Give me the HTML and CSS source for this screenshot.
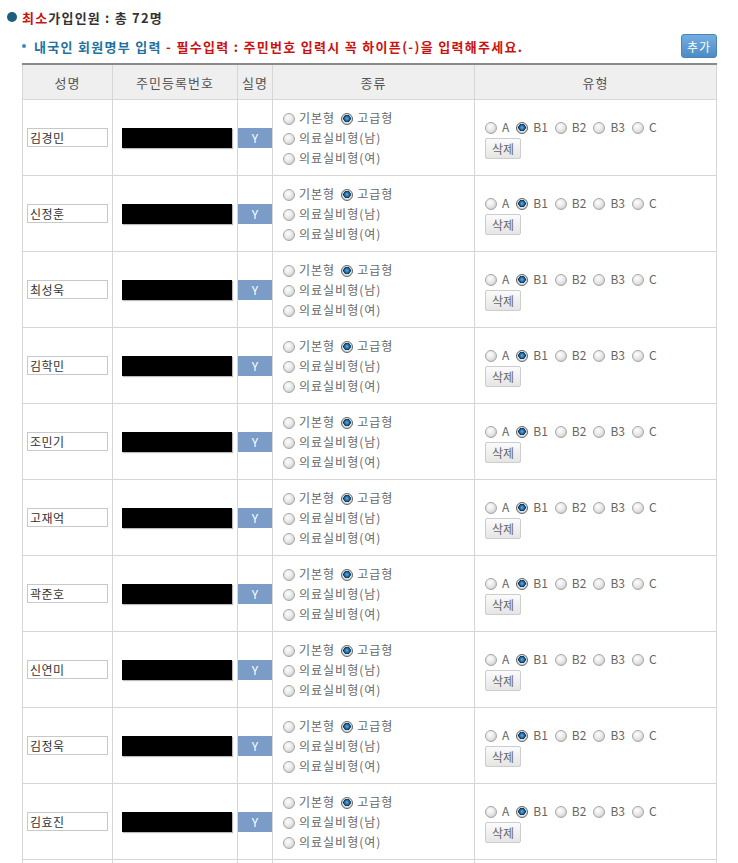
FILE: index.html
```html
<!DOCTYPE html>
<html>
<head>
<meta http-equiv="Content-Type" content="text/html; charset=utf-8"/>
<title>내국인 회원명부 입력</title>
<link rel="stylesheet" href="styles.css">
</head>
<body>

<p class="total"><span class="dot"></span><span class="red">최소</span>가입인원 : 총 72명</p>

<div class="bar">
  <p class="notice"><span class="mini"></span><span class="blue">내국인 회원명부 입력 </span><span class="red">- 필수입력 : 주민번호 입력시 꼭 하이픈(-)을 입력해주세요.</span></p>
  <button class="btn-add">추가</button>
</div>

<table class="members">
<thead>
<tr><th class="c-name">성명</th><th class="c-jumin">주민등록번호</th><th class="c-real">실명</th><th class="c-kind">종류</th><th>유형</th></tr>
</thead>
<tbody>
<tr>
<td><input class="txt" type="text" value="김경민"></td>
<td class="jumin"><span class="hide"></span></td>
<td class="real"><span class="ok">Y</span></td>
<td class="kind">
<label><input type="radio" name="k1">기본형</label><label><input type="radio" name="k1" checked>고급형</label><br>
<label><input type="radio" name="k1">의료실비형(남)</label><br>
<label><input type="radio" name="k1">의료실비형(여)</label>
</td>
<td class="grade">
<label><input type="radio" name="g1">A</label><label><input type="radio" name="g1" checked>B1</label><label><input type="radio" name="g1">B2</label><label><input type="radio" name="g1">B3</label><label><input type="radio" name="g1">C</label><br>
<button class="btn-del">삭제</button>
</td>
</tr>
<tr>
<td><input class="txt" type="text" value="신정훈"></td>
<td class="jumin"><span class="hide"></span></td>
<td class="real"><span class="ok">Y</span></td>
<td class="kind">
<label><input type="radio" name="k2">기본형</label><label><input type="radio" name="k2" checked>고급형</label><br>
<label><input type="radio" name="k2">의료실비형(남)</label><br>
<label><input type="radio" name="k2">의료실비형(여)</label>
</td>
<td class="grade">
<label><input type="radio" name="g2">A</label><label><input type="radio" name="g2" checked>B1</label><label><input type="radio" name="g2">B2</label><label><input type="radio" name="g2">B3</label><label><input type="radio" name="g2">C</label><br>
<button class="btn-del">삭제</button>
</td>
</tr>
<tr>
<td><input class="txt" type="text" value="최성욱"></td>
<td class="jumin"><span class="hide"></span></td>
<td class="real"><span class="ok">Y</span></td>
<td class="kind">
<label><input type="radio" name="k3">기본형</label><label><input type="radio" name="k3" checked>고급형</label><br>
<label><input type="radio" name="k3">의료실비형(남)</label><br>
<label><input type="radio" name="k3">의료실비형(여)</label>
</td>
<td class="grade">
<label><input type="radio" name="g3">A</label><label><input type="radio" name="g3" checked>B1</label><label><input type="radio" name="g3">B2</label><label><input type="radio" name="g3">B3</label><label><input type="radio" name="g3">C</label><br>
<button class="btn-del">삭제</button>
</td>
</tr>
<tr>
<td><input class="txt" type="text" value="김학민"></td>
<td class="jumin"><span class="hide"></span></td>
<td class="real"><span class="ok">Y</span></td>
<td class="kind">
<label><input type="radio" name="k4">기본형</label><label><input type="radio" name="k4" checked>고급형</label><br>
<label><input type="radio" name="k4">의료실비형(남)</label><br>
<label><input type="radio" name="k4">의료실비형(여)</label>
</td>
<td class="grade">
<label><input type="radio" name="g4">A</label><label><input type="radio" name="g4" checked>B1</label><label><input type="radio" name="g4">B2</label><label><input type="radio" name="g4">B3</label><label><input type="radio" name="g4">C</label><br>
<button class="btn-del">삭제</button>
</td>
</tr>
<tr>
<td><input class="txt" type="text" value="조민기"></td>
<td class="jumin"><span class="hide"></span></td>
<td class="real"><span class="ok">Y</span></td>
<td class="kind">
<label><input type="radio" name="k5">기본형</label><label><input type="radio" name="k5" checked>고급형</label><br>
<label><input type="radio" name="k5">의료실비형(남)</label><br>
<label><input type="radio" name="k5">의료실비형(여)</label>
</td>
<td class="grade">
<label><input type="radio" name="g5">A</label><label><input type="radio" name="g5" checked>B1</label><label><input type="radio" name="g5">B2</label><label><input type="radio" name="g5">B3</label><label><input type="radio" name="g5">C</label><br>
<button class="btn-del">삭제</button>
</td>
</tr>
<tr>
<td><input class="txt" type="text" value="고재억"></td>
<td class="jumin"><span class="hide"></span></td>
<td class="real"><span class="ok">Y</span></td>
<td class="kind">
<label><input type="radio" name="k6">기본형</label><label><input type="radio" name="k6" checked>고급형</label><br>
<label><input type="radio" name="k6">의료실비형(남)</label><br>
<label><input type="radio" name="k6">의료실비형(여)</label>
</td>
<td class="grade">
<label><input type="radio" name="g6">A</label><label><input type="radio" name="g6" checked>B1</label><label><input type="radio" name="g6">B2</label><label><input type="radio" name="g6">B3</label><label><input type="radio" name="g6">C</label><br>
<button class="btn-del">삭제</button>
</td>
</tr>
<tr>
<td><input class="txt" type="text" value="곽준호"></td>
<td class="jumin"><span class="hide"></span></td>
<td class="real"><span class="ok">Y</span></td>
<td class="kind">
<label><input type="radio" name="k7">기본형</label><label><input type="radio" name="k7" checked>고급형</label><br>
<label><input type="radio" name="k7">의료실비형(남)</label><br>
<label><input type="radio" name="k7">의료실비형(여)</label>
</td>
<td class="grade">
<label><input type="radio" name="g7">A</label><label><input type="radio" name="g7" checked>B1</label><label><input type="radio" name="g7">B2</label><label><input type="radio" name="g7">B3</label><label><input type="radio" name="g7">C</label><br>
<button class="btn-del">삭제</button>
</td>
</tr>
<tr>
<td><input class="txt" type="text" value="신연미"></td>
<td class="jumin"><span class="hide"></span></td>
<td class="real"><span class="ok">Y</span></td>
<td class="kind">
<label><input type="radio" name="k8">기본형</label><label><input type="radio" name="k8" checked>고급형</label><br>
<label><input type="radio" name="k8">의료실비형(남)</label><br>
<label><input type="radio" name="k8">의료실비형(여)</label>
</td>
<td class="grade">
<label><input type="radio" name="g8">A</label><label><input type="radio" name="g8" checked>B1</label><label><input type="radio" name="g8">B2</label><label><input type="radio" name="g8">B3</label><label><input type="radio" name="g8">C</label><br>
<button class="btn-del">삭제</button>
</td>
</tr>
<tr>
<td><input class="txt" type="text" value="김정욱"></td>
<td class="jumin"><span class="hide"></span></td>
<td class="real"><span class="ok">Y</span></td>
<td class="kind">
<label><input type="radio" name="k9">기본형</label><label><input type="radio" name="k9" checked>고급형</label><br>
<label><input type="radio" name="k9">의료실비형(남)</label><br>
<label><input type="radio" name="k9">의료실비형(여)</label>
</td>
<td class="grade">
<label><input type="radio" name="g9">A</label><label><input type="radio" name="g9" checked>B1</label><label><input type="radio" name="g9">B2</label><label><input type="radio" name="g9">B3</label><label><input type="radio" name="g9">C</label><br>
<button class="btn-del">삭제</button>
</td>
</tr>
<tr>
<td><input class="txt" type="text" value="김효진"></td>
<td class="jumin"><span class="hide"></span></td>
<td class="real"><span class="ok">Y</span></td>
<td class="kind">
<label><input type="radio" name="k10">기본형</label><label><input type="radio" name="k10" checked>고급형</label><br>
<label><input type="radio" name="k10">의료실비형(남)</label><br>
<label><input type="radio" name="k10">의료실비형(여)</label>
</td>
<td class="grade">
<label><input type="radio" name="g10">A</label><label><input type="radio" name="g10" checked>B1</label><label><input type="radio" name="g10">B2</label><label><input type="radio" name="g10">B3</label><label><input type="radio" name="g10">C</label><br>
<button class="btn-del">삭제</button>
</td>
</tr>
<tr>
<td><input class="txt" type="text" value="이수진"></td>
<td class="jumin"><span class="hide"></span></td>
<td class="real"><span class="ok">Y</span></td>
<td class="kind">
<label><input type="radio" name="k11">기본형</label><label><input type="radio" name="k11" checked>고급형</label><br>
<label><input type="radio" name="k11">의료실비형(남)</label><br>
<label><input type="radio" name="k11">의료실비형(여)</label>
</td>
<td class="grade">
<label><input type="radio" name="g11">A</label><label><input type="radio" name="g11" checked>B1</label><label><input type="radio" name="g11">B2</label><label><input type="radio" name="g11">B3</label><label><input type="radio" name="g11">C</label><br>
<button class="btn-del">삭제</button>
</td>
</tr>
</tbody>
</table>

</body>
</html>
```

FILE: styles.css
```css
body {
  margin: 0;
  background-color: white;
  font-family: "Noto Sans CJK KR", "Noto Sans", sans-serif;
  font-size: 12px;
  color: #555;
}

.red {
  color: #cc1111;
}

.blue {
  color: #22719f;
}

/* top line */
.total {
  display: flex;
  align-items: center;
  height: 18px;
  margin: 8px 0 0 7px;
  font-size: 13px;
  font-weight: bold;
  letter-spacing: 1.2px;
  color: #333;
  white-space: pre;
}

.total .dot {
  width: 10px;
  height: 10px;
  margin-right: 5px;
  border-radius: 50%;
  background-color: #1d5d7d;
}

.bar {
  display: flex;
  align-items: center;
  justify-content: space-between;
  width: 695px;
  height: 24px;
  margin: 8px 0 0 22px;
}

.notice {
  display: flex;
  align-items: center;
  margin: 0;
  font-size: 13px;
  font-weight: bold;
  letter-spacing: 1.3px;
  white-space: pre;
}

.notice .mini {
  width: 4px;
  height: 4px;
  margin-right: 8px;
  border-radius: 50%;
  background-color: #3a8bbd;
}

.btn-add {
  width: 36px;
  height: 24px;
  padding: 0;
  border: 1px solid #4c84b6;
  border-radius: 3px;
  background: linear-gradient(#74aee0, #4d8bc5);
  color: white;
  font-family: inherit;
  font-size: 12px;
  letter-spacing: 1px;
}

/* table */
.members {
  width: 695px;
  margin: 5px 0 0 22px;
  border-collapse: collapse;
  border-top: 2px solid #8a8a8a;
  table-layout: fixed;
}

.members th {
  height: 34px;
  padding: 0;
  border: 1px solid #d6d6d6;
  border-top: none;
  background-color: #efefef;
  font-size: 13px;
  font-weight: normal;
  color: #555;
  letter-spacing: 1px;
}

.members .c-name { width: 89px; }
.members .c-jumin { width: 124px; }
.members .c-real { width: 34px; }
.members .c-kind { width: 201px; }

.members td {
  height: 75px;
  padding: 0 4px;
  border: 1px solid #d6d6d6;
  line-height: 20px;
  vertical-align: middle;
}

.txt {
  box-sizing: border-box;
  width: 81px;
  height: 19px;
  margin: 0;
  padding: 0 2px;
  border: 1px solid #c8c8c8;
  font-family: inherit;
  font-size: 12px;
  letter-spacing: 0.5px;
  color: #333;
}

.members td.jumin {
  padding: 0 0 0 9px;
}

.hide {
  display: block;
  width: 110px;
  height: 20px;
  background-color: #000;
  box-shadow: 1px 1px 1px #bbb;
}

.members td.real {
  padding: 0;
}

.ok {
  display: block;
  height: 20px;
  background-color: #7b9cc6;
  color: white;
  text-align: center;
  line-height: 20px;
}

.members td.kind,
.members td.grade {
  padding-left: 10px;
  color: #666;
}

.kind label {
  margin-right: 6px;
  letter-spacing: 1px;
}

.grade label {
  margin-right: 7px;
}

input[type="radio"] {
  appearance: none;
  box-sizing: border-box;
  width: 12px;
  height: 12px;
  margin: 0 4px 0 0;
  border: 1px solid #a8a8a8;
  border-radius: 50%;
  background: radial-gradient(circle at 40% 35%, #ffffff 0, #e2e2e2 5px, #c8c8c8 7px);
  vertical-align: -2px;
}

.grade input[type="radio"] {
  margin-right: 5px;
}

input[type="radio"]:checked {
  border-color: #666;
  background: radial-gradient(circle at 50% 45%, #5fb0e6 0, #1a609a 2.5px, #0b2e4d 3.5px, #e6e6e6 4px, #c6c6c6 6px);
}

.btn-del {
  width: 36px;
  height: 21px;
  margin-top: 1px;
  padding: 0;
  border: 1px solid #cdcdcd;
  border-radius: 2px;
  background: linear-gradient(#fbfbfb, #e5e5e5);
  color: #666;
  font-family: inherit;
  font-size: 12px;
  vertical-align: top;
}
```
